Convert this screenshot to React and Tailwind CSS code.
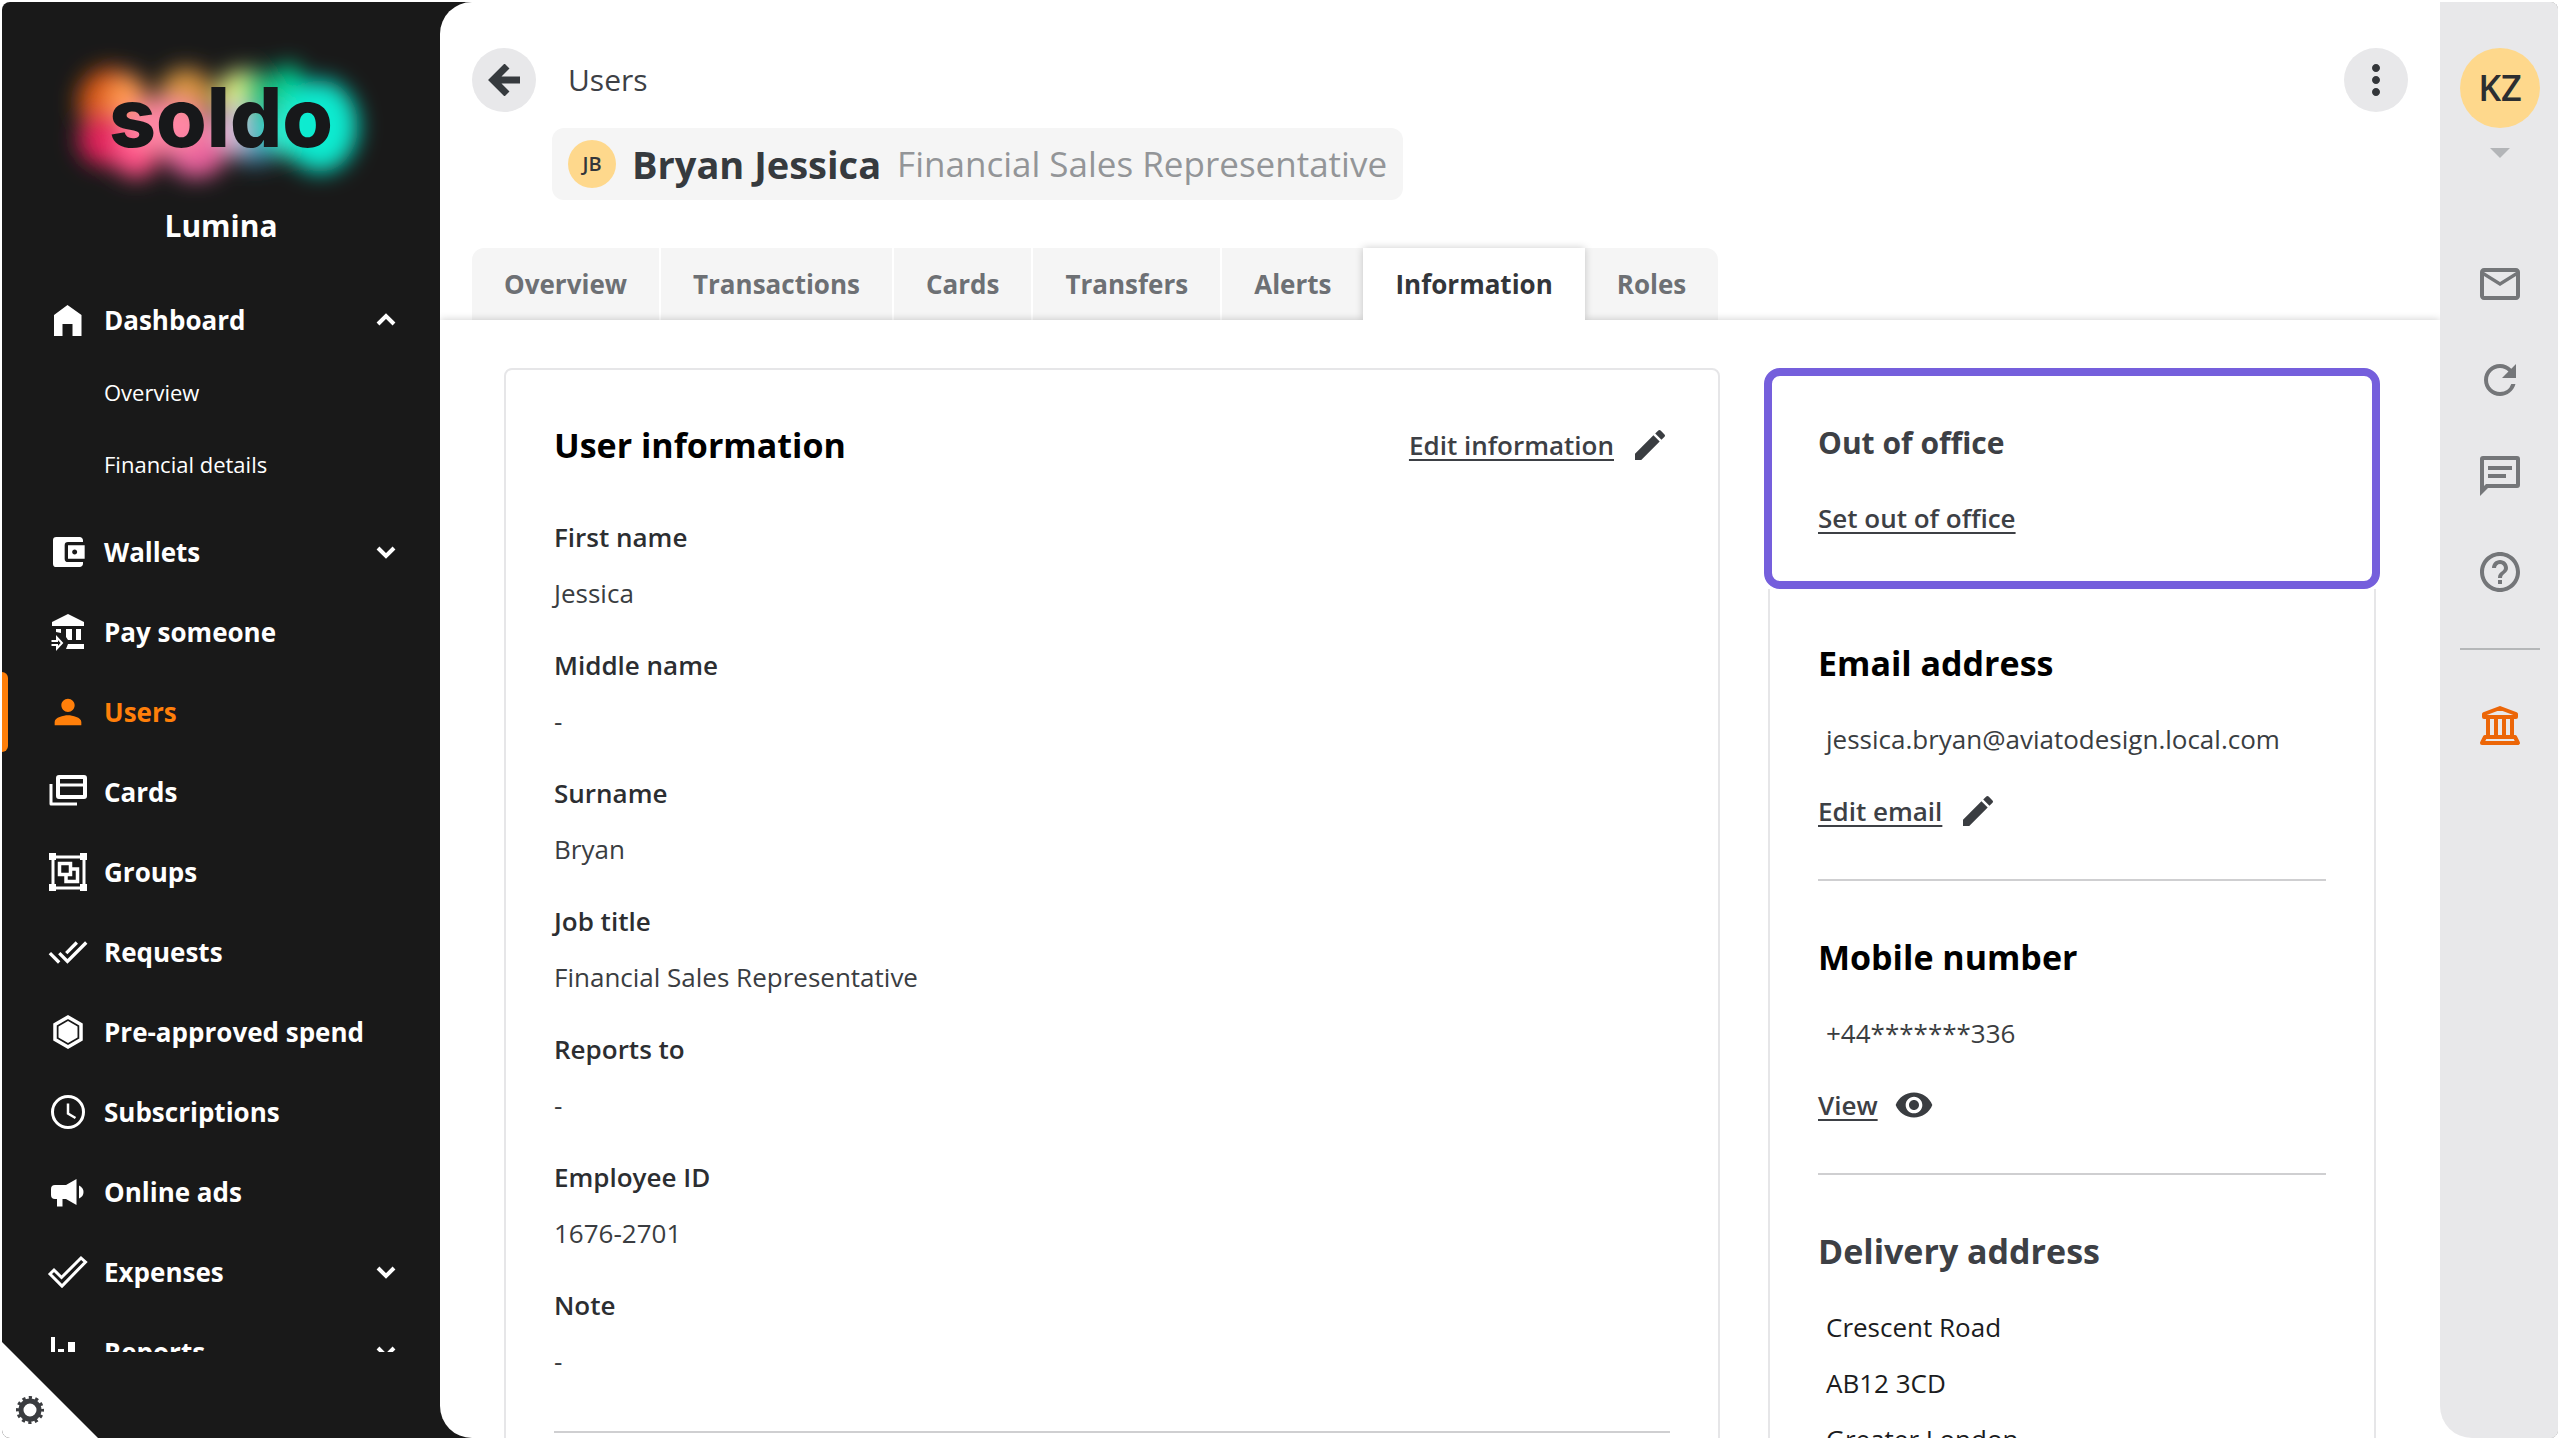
import { MdAccountBalanceWallet, MdPerson, MdDoneAll, MdMailOutline, MdRefresh, MdHelpOutline, MdEdit, MdVisibility, MdArrowDropDown, MdMoreVert } from "react-icons/md";

const icon = "size-12 shrink-0";

function HomeIcon() {
  return (
    <svg viewBox="0 0 48 48" className={icon} fill="currentColor" aria-hidden="true">
      <path d="M10 40V19L23.500 9 37.500 19V40H28.500V28H18.500V40Z" />
    </svg>
  );
}

function PayIcon() {
  return (
    <svg viewBox="0 0 48 48" className={icon} fill="currentColor" aria-hidden="true">
      <path d="M8 16.500V14L24 6 40 14V18H8Z" />
      <path d="M12 21h5v4l-5-1zM22 21h6v11h-4l-2-3zM32 21h5v11h-5zM24 36h16v5H22z" />
      <path d="M7.500 33H13v-3.500l5 5.500-5 5.500V37H7.500" fill="none" stroke="currentColor" strokeWidth="2" />
    </svg>
  );
}

function CardsIcon() {
  return (
    <svg viewBox="0 0 48 48" className={icon} fill="none" stroke="currentColor" strokeWidth="4" aria-hidden="true">
      <rect x="14" y="9" width="27" height="20" rx="1" />
      <path d="M14 17H41" strokeWidth="3" />
      <path d="M7 16V36H33" strokeWidth="3" strokeLinejoin="round" />
    </svg>
  );
}

function GroupsIcon() {
  return (
    <svg viewBox="0 0 48 48" className={icon} fill="none" stroke="currentColor" aria-hidden="true">
      <rect x="9" y="9" width="31" height="31" strokeWidth="3" />
      <path d="M5 5h7v7H5zM36 5h7v7h-7zM5 36h7v7H5zM36 36h7v7h-7z" fill="currentColor" stroke="none" />
      <path d="M15.500 15.500h11v11h-11z M27 21h6.500v12.500H22V28" strokeWidth="3.500" />
    </svg>
  );
}

function HexIcon() {
  return (
    <svg viewBox="0 0 48 48" className={icon} aria-hidden="true">
      <path d="M24 9 37 16.500V31.500L24 39 11 31.500V16.500Z" fill="none" stroke="currentColor" strokeWidth="3.500" />
      <path d="M24 13 33.500 18.500V29.500L24 35 14.500 29.500V18.500Z" fill="currentColor" />
    </svg>
  );
}

function ClockIcon() {
  return (
    <svg viewBox="0 0 48 48" className={icon} fill="none" stroke="currentColor" strokeWidth="3" aria-hidden="true">
      <circle cx="24" cy="24" r="15.500" />
      <path d="M24 15.500V25.500L31.500 30" strokeWidth="2.500" />
    </svg>
  );
}

function MegaphoneIcon() {
  return (
    <svg viewBox="0 0 48 48" className={icon} fill="currentColor" aria-hidden="true">
      <path d="M11 17H22L32.500 11V37L22 31H18.500V38.500H13V31H11Q7 31 7 27V21Q7 17 11 17Z" />
      <path d="M35 17.500Q39.500 19.500 39.500 24T35 30.500Z" />
    </svg>
  );
}

function CheckIcon() {
  return (
    <svg viewBox="0 0 48 48" className={icon} fill="none" stroke="currentColor" strokeWidth="3" aria-hidden="true">
      <path d="M6 26 10 22 17.500 29.500 37 10 41.500 14 18 38Z" />
    </svg>
  );
}

function ChartIcon() {
  return (
    <svg viewBox="0 0 48 48" className={icon} fill="currentColor" aria-hidden="true">
      <path d="M7 9h4v26h30v4H7zM14 21h6v11h-6zM24 14h7v18h-7zM34 24h6v8h-6z" />
    </svg>
  );
}

function Chevron({ up }) {
  return (
    <svg viewBox="0 0 24 24" className="ml-auto size-6 shrink-0" fill="none" stroke="currentColor" strokeWidth="4" aria-hidden="true">
      <path d={up ? "M4 16 12 8 20 16" : "M4 8 12 16 20 8"} />
    </svg>
  );
}

function BankIcon() {
  return (
    <svg viewBox="0 0 48 48" className="size-12" fill="none" stroke="currentColor" strokeWidth="4" strokeLinejoin="round" aria-hidden="true">
      <path d="M8 15V12L24 6 40 12V15Z" />
      <path d="M12 16V34M20 16V34M28 16V34M36 16V34" />
      <path d="M9 35H39L42 41H6Z" />
    </svg>
  );
}

function MessageIcon() {
  return (
    <svg viewBox="0 0 48 48" className="size-12" fill="currentColor" aria-hidden="true">
      <path fillRule="evenodd" d="M7 4H41Q44 4 44 7V33Q44 36 41 36H12L4 44V7Q4 4 7 4ZM8 8V34L10 32H40V8Z" />
      <path d="M12 14h24v4H12zM12 22h18v4H12z" />
    </svg>
  );
}

function GearIcon() {
  return (
    <svg viewBox="-16 -16 32 32" className="size-8" aria-hidden="true">
      <circle r="9" fill="none" stroke="currentColor" strokeWidth="5" />
      <circle r="12" fill="none" stroke="currentColor" strokeWidth="4" strokeDasharray="3.142 3.142" strokeDashoffset="1.571" />
    </svg>
  );
}

function Logo() {
  return (
    <div className="relative flex h-48 w-full shrink-0 items-center justify-center">
      <svg viewBox="0 0 438 192" className="absolute inset-0 size-full" aria-hidden="true">
        <filter id="glow" x="-30%" y="-30%" width="160%" height="160%">
          <feGaussianBlur stdDeviation="11" />
        </filter>
        <g filter="url(#glow)">
          <ellipse cx="108" cy="88" rx="32" ry="34" fill="#dc5a18" />
          <ellipse cx="126" cy="90" rx="20" ry="30" fill="#ff9a50" />
          <ellipse cx="104" cy="126" rx="28" ry="26" fill="#e0245a" />
          <ellipse cx="134" cy="138" rx="24" ry="26" fill="#ff4f86" />
          <ellipse cx="184" cy="82" rx="28" ry="28" fill="#d8943f" />
          <ellipse cx="194" cy="134" rx="32" ry="30" fill="#e8609c" />
          <ellipse cx="164" cy="112" rx="44" ry="26" fill="#ff86a4" />
          <ellipse cx="252" cy="128" rx="28" ry="22" fill="#3f90b4" />
          <ellipse cx="236" cy="84" rx="20" ry="28" fill="#eefa88" />
          <ellipse cx="232" cy="114" rx="18" ry="24" fill="#dcbcd8" />
          <ellipse cx="254" cy="78" rx="15" ry="24" fill="#2cc47c" />
          <ellipse cx="256" cy="112" rx="15" ry="18" fill="#1fc0c0" />
          <ellipse cx="286" cy="80" rx="18" ry="30" fill="#00cf90" />
          <ellipse cx="288" cy="114" rx="20" ry="30" fill="#3df5c8" />
          <ellipse cx="318" cy="112" rx="38" ry="46" fill="#0cebd0" />
        </g>
      </svg>
      <span className="relative mt-4 font-[Inter] text-[82px] leading-none font-extrabold text-[#17181a]">soldo</span>
    </div>
  );
}

const nav = [
  { label: "Wallets", icon: <MdAccountBalanceWallet className="mx-1 size-10 shrink-0" />, chevron: true },
  { label: "Pay someone", icon: <PayIcon /> },
  { label: "Users", icon: <MdPerson className="mx-1 size-10 shrink-0" />, active: true },
  { label: "Cards", icon: <CardsIcon /> },
  { label: "Groups", icon: <GroupsIcon /> },
  { label: "Requests", icon: <MdDoneAll className="mx-1 size-10 shrink-0" /> },
  { label: "Pre-approved spend", icon: <HexIcon /> },
  { label: "Subscriptions", icon: <ClockIcon /> },
  { label: "Online ads", icon: <MegaphoneIcon /> },
  { label: "Expenses", icon: <CheckIcon />, chevron: true },
  { label: "Reports", icon: <ChartIcon />, chevron: true },
];

function NavItem({ label, icon, chevron, up, active }) {
  const tone = active ? "text-[#ff7f0a]" : "text-white";
  return (
    <li className="flex">
      <span className={active ? "-mr-1.5 w-1.5 rounded-r-md bg-[#ff7f0a]" : "-mr-1.5 w-1.5"} />
      <button className={"flex h-20 grow items-center gap-3 pr-[42px] pl-[42px] text-[26px] font-bold " + tone}>
        {icon}
        <span>{label}</span>
        {chevron && <Chevron up={up} />}
      </button>
    </li>
  );
}

const subLink = "flex h-[72px] items-center pl-[102px] text-[22px]";

function Sidebar() {
  return (
    <aside className="relative flex w-[438px] shrink-0 flex-col pt-3 text-white">
      <Logo />
      <p className="-mt-1 shrink-0 text-center text-[30px] leading-[48px] font-bold">Lumina</p>
      <nav className="mt-[30px] mb-[86px] min-h-0 grow overflow-hidden">
        <ul>
          <NavItem label="Dashboard" icon={<HomeIcon />} chevron up />
          <li className="-mt-1 mb-3">
            <a href="#overview" className={subLink}>Overview</a>
            <a href="#financial" className={subLink}>Financial details</a>
          </li>
          {nav.map((n) => (
            <NavItem key={n.label} {...n} />
          ))}
        </ul>
      </nav>
      <button aria-label="Settings" className="absolute bottom-0 left-0 flex size-24 items-end bg-white pb-3 pl-3 text-[#3b3d40] [clip-path:polygon(0_0,100%_100%,0_100%)]">
        <GearIcon />
      </button>
    </aside>
  );
}

const tabs = ["Overview", "Transactions", "Cards", "Transfers", "Alerts", "Information", "Roles"];

function Tabs() {
  return (
    <div role="tablist" className="ml-8 flex h-[72px]">
      {tabs.map((t, i) => {
        const active = t === "Information";
        return (
          <button
            key={t}
            role="tab"
            aria-selected={active}
            className={
              "px-8 text-[26px] font-bold first:rounded-tl-xl last:rounded-tr-xl " +
              (active
                ? "relative z-10 bg-white text-[#33363a] shadow-[0_0_8px_rgba(0,0,0,0.2)] [clip-path:inset(-10px_-10px_0_-10px)]"
                : "bg-[#f5f5f5] text-[#6d7074]" + (i < 4 ? " border-r-2 border-white" : ""))
            }
          >
            {t}
          </button>
        );
      })}
    </div>
  );
}

const fields = [
  ["First name", "Jessica"],
  ["Middle name", "-"],
  ["Surname", "Bryan"],
  ["Job title", "Financial Sales Representative"],
  ["Reports to", "-"],
  ["Employee ID", "1676-2701"],
  ["Note", "-"],
];

const link = "text-[26px] leading-9 font-semibold text-[#3d4045] underline underline-offset-4";
const heading = "text-[34px] leading-[48px] font-bold";
const value = "pl-2 text-[26px] leading-[56px]";

function UserCard() {
  return (
    <section className="rounded-lg border-2 border-[#e6e6e8] px-12">
      <div className="flex items-center pt-[51px]">
        <h2 className={heading + " text-black"}>User information</h2>
        <a href="#edit" className={"ml-auto " + link}>Edit information</a>
        <MdEdit className="ml-4 size-10 text-[#3a3d41]" />
      </div>
      <dl className="pt-[42px]">
        {fields.map(([k, v]) => (
          <div key={k} className="h-32">
            <dt className="text-[26px] leading-[52px] font-semibold text-[#2c2e31]">{k}</dt>
            <dd className="text-[26px] leading-[60px] text-[#3a3d41]">{v}</dd>
          </div>
        ))}
      </dl>
      <hr className="mt-6 border-t-2 border-[#cfcfd1]" />
    </section>
  );
}

function ContactCard() {
  return (
    <section className="flex flex-col">
      <div className="-mx-1 h-[221px] shrink-0 rounded-2xl border-8 border-[#755fdc] px-[46px] pt-[43px]">
        <h2 className="text-[30px] leading-[48px] font-bold text-[#3d4045]">Out of office</h2>
        <a href="#ooo" className={"mt-[33px] inline-block " + link}>Set out of office</a>
      </div>
      <div className="grow border-x-2 border-[#e6e6e8] px-12 pt-[50px]">
        <h2 className={heading + " text-black"}>Email address</h2>
        <p className={"mt-6 text-[#3a3d41] " + value}>jessica.bryan@aviatodesign.local.com</p>
        <div className="mt-6 flex items-center">
          <a href="#email" className={link}>Edit email</a>
          <MdEdit className="ml-4 size-10 text-[#3a3d41]" />
        </div>
        <hr className="mt-12 border-t-2 border-[#cfcfd1]" />
        <h2 className={heading + " mt-[52px] text-black"}>Mobile number</h2>
        <p className={"mt-6 text-[#3a3d41] " + value}>+44*******336</p>
        <div className="mt-6 flex items-center">
          <a href="#view" className={link}>View</a>
          <MdVisibility className="ml-4 size-10 text-[#3a3d41]" />
        </div>
        <hr className="mt-12 border-t-2 border-[#cfcfd1]" />
        <h2 className={heading + " mt-[52px] text-[#3d4045]"}>Delivery address</h2>
        <address className={"mt-6 text-[#1b1c1e] not-italic " + value}>
          <p>Crescent Road</p>
          <p>AB12 3CD</p>
          <p>Greater London</p>
        </address>
      </div>
    </section>
  );
}

function Main() {
  return (
    <main className="flex min-w-0 grow flex-col overflow-hidden rounded-l-[32px] bg-white">
      <header className="flex px-8 pt-[46px]">
        <button aria-label="Back" className="flex size-16 items-center justify-center rounded-full bg-[#e8e8ea] text-[#363a3e]">
          <svg viewBox="0 0 32 32" className="size-8" fill="none" stroke="currentColor" strokeWidth="7" aria-hidden="true">
            <path d="M19 2 5 16 19 30M6 16H32" />
          </svg>
        </button>
        <a href="#users" className="ml-8 text-[30px] leading-[64px] font-medium text-[#3d4045]">Users</a>
        <button aria-label="More" className="ml-auto flex size-16 items-center justify-center rounded-full bg-[#e8e8ea] text-[#33363a]">
          <MdMoreVert className="size-12" />
        </button>
      </header>
      <div className="mt-4 ml-28 flex h-[72px] w-fit shrink-0 items-center rounded-xl bg-[#f5f5f5] px-4">
        <span className="flex size-12 items-center justify-center rounded-full bg-[#fed88c] text-[20px] font-semibold text-[#33363a]">JB</span>
        <h1 className="ml-4 text-[38px] font-bold text-[#363a3e]">Bryan Jessica</h1>
        <span className="ml-4 text-[35px] font-medium text-[#939598]">Financial Sales Representative</span>
      </div>
      <div className="pt-12">
        <Tabs />
      </div>
      <div className="grid min-h-0 grow grid-cols-[2fr_1fr] gap-12 px-16 pt-12 shadow-[0_0_8px_rgba(0,0,0,0.2)]">
        <UserCard />
        <ContactCard />
      </div>
    </main>
  );
}

function Rail() {
  const b = "flex h-24 items-center justify-center";
  return (
    <div className="flex w-[118px] shrink-0 flex-col bg-white">
      <div className="flex w-full grow flex-col items-center rounded-bl-[32px] bg-[#e8e8ea] pt-[46px] pl-0.5 text-[#747679]">
        <button aria-label="Account" className="flex flex-col items-center text-[#b3b5b8]">
          <span className="flex size-20 items-center justify-center rounded-full bg-[#fed88c] text-[36px] font-semibold text-[#2c2e31]">KZ</span>
          <MdArrowDropDown className="size-12" />
        </button>
        <div className="mt-[60px] flex flex-col">
          <button aria-label="Mail" className={b}><MdMailOutline className="size-12" /></button>
          <button aria-label="Refresh" className={b}><MdRefresh className="size-12" /></button>
          <button aria-label="Messages" className={b}><MessageIcon /></button>
          <button aria-label="Help" className={b}><MdHelpOutline className="size-12" /></button>
        </div>
        <hr className="mt-7 w-20 border-t-2 border-[#b5b7b9]" />
        <button aria-label="Bank" className="mt-[52px] text-[#ec6608]"><BankIcon /></button>
      </div>
    </div>
  );
}

export default function App() {
  return (
    <div className="h-screen bg-white p-0.5 font-['Open_Sans',sans-serif]">
      <div className="flex h-full overflow-hidden rounded-lg bg-[#191919]">
        <Sidebar />
        <Main />
        <Rail />
      </div>
    </div>
  );
}
